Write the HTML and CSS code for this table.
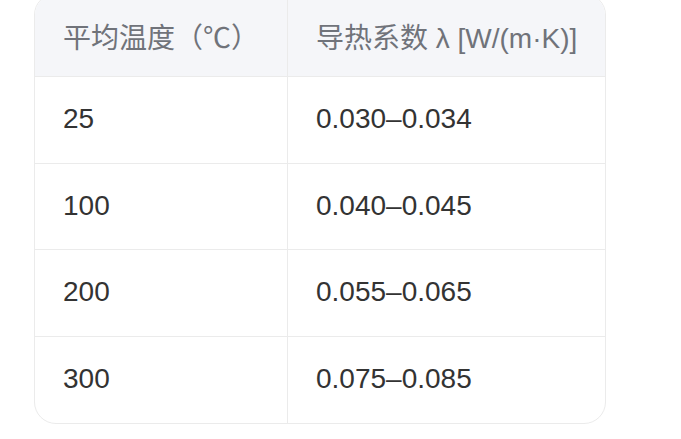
FILE: index.html
```html
<!DOCTYPE html>
<html lang="zh">
<head>
<meta charset="utf-8">
<link rel="stylesheet" href="styles.css">
</head>
<body>
<div class="wrap">
  <table class="data">
    <thead>
      <tr><th class="c1">平均温度（℃）</th><th class="c2">导热系数 λ [W/(m·K)]</th></tr>
    </thead>
    <tbody>
      <tr><td class="c1">25</td><td class="c2">0.030–0.034</td></tr>
      <tr><td class="c1">100</td><td class="c2">0.040–0.045</td></tr>
      <tr><td class="c1">200</td><td class="c2">0.055–0.065</td></tr>
      <tr><td class="c1">300</td><td class="c2">0.075–0.085</td></tr>
    </tbody>
  </table>
</div>
</body>
</html>
```

FILE: styles.css
```css
html, body {
  margin: 0;
  padding: 0;
  background: #ffffff;
}
.wrap {
  padding-left: 34px;
}
.data {
  margin-top: -7px;
  width: 572px;
  border-collapse: separate;
  border-spacing: 0;
  border: 1px solid #ebebeb;
  border-radius: 22px;
  overflow: hidden;
  font-family: "Liberation Sans", "Noto Sans CJK SC", sans-serif;
  font-size: 28px;
  table-layout: fixed;
}
.data th, .data td {
  text-align: left;
  font-weight: normal;
  line-height: 42px;
  padding: 0 28px;
  white-space: nowrap;
}
.data th {
  background: #f5f6f9;
  color: #70737a;
  padding-top: 24px;
  padding-bottom: 16px;
  border-bottom: 1px solid #ebebeb;
}
.data td {
  color: #333333;
  padding-top: 21px;
  padding-bottom: 22.67px;
  border-bottom: 1px solid #ebebeb;
}
.data tbody tr:last-child td {
  border-bottom: none;
}
.data .c1 {
  width: 252px;
  box-sizing: border-box;
}
.data .c2 {
  border-left: 1px solid #ebebeb;
}
```
